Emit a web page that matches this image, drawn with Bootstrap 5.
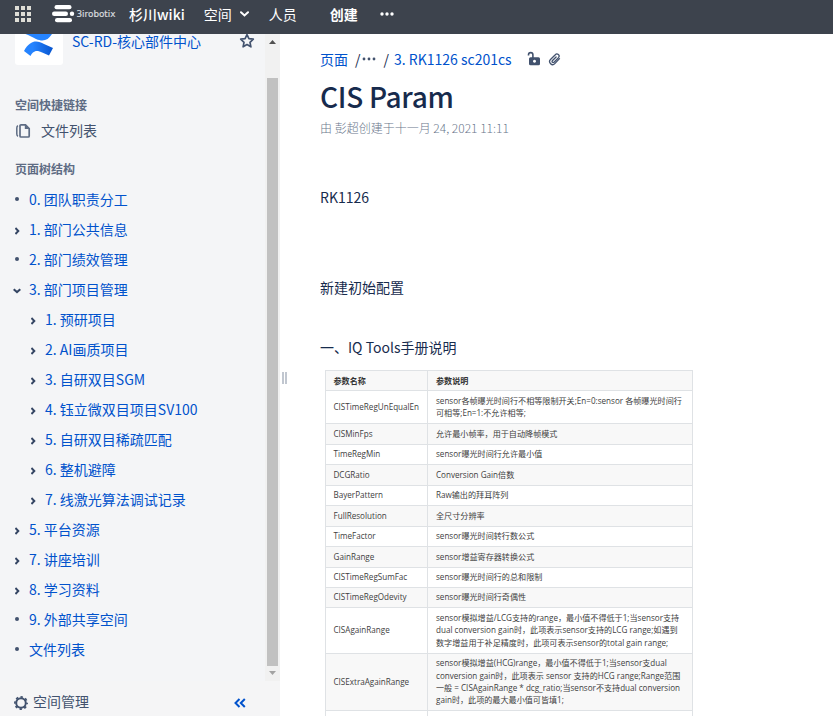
<!DOCTYPE html>
<html lang="zh-CN">
<head>
<meta charset="utf-8">
<meta name="viewport" content="width=device-width, initial-scale=1">
<title>CIS Param - 杉川wiki</title>
<link href="https://cdn.jsdelivr.net/npm/bootstrap@5.3.0/dist/css/bootstrap.min.css" rel="stylesheet">
<style>
body{font-family:"Noto Sans CJK SC",sans-serif;font-size:14px;line-height:20px;color:#172b4d;height:716px;background:#fff}
a{color:#0052cc;text-decoration:none}
svg{display:block;flex:none}
.fit{min-height:0}
.topbar{height:34px;background:#3d434d;color:#fff;padding:0 0 6px 15px}
.topbar a{color:#fff}
.side{width:280px;background:#f4f5f7}
.side-scroll{padding-left:15px}
.space-logo{width:48px;height:31px;background:#fff;border-radius:0 0 3px 3px}
.space-name{margin:-3px 0 0 9px;width:166px}
.side-title{font-size:12px;font-weight:700;color:#5e6c84;line-height:16px}
.side-text{color:#42526e}
.tree li{height:30px;line-height:28px;display:flex;align-items:center}
.tree li a{height:30px}
.tree .tw{width:14px;flex:none;overflow:visible}
.tree ul li{padding-left:16px}
.track{width:15px;background:#f1f1f1}
.thumb{width:11px;height:588px;background:#c1c1c1;margin-top:34px}
.side-foot{height:35px;background:#f5f5f6;padding:6px 34px 0 14px}
.grip{width:5px;height:12px;border:solid #c1c7d0;border-width:0 2px;margin:338px 0 0 2px}
.page{padding:15px 0 0 33px}
.page h1{font-size:28px;font-weight:500;line-height:34px;letter-spacing:-.28px;margin:10px 0 0;color:#172b4d}
.byline{font-size:12px;line-height:16px;color:#6b778c;font-weight:300}
.param{width:368px;table-layout:fixed;margin:13px 0 0 4.5px;font:8.11px/12.4px "Open Sans","Noto Sans CJK SC",sans-serif;border-collapse:collapse;white-space:nowrap}
.param td,.param th{border:1px solid #dfe2e5;padding:0 0 0 8px;vertical-align:middle;height:20.45px;color:#404040}
.param th{font-weight:700;color:#333}
.param tr:nth-child(odd){background:#f8f8f8}
.param .l2 td{height:33px}.param .l3 td{height:45.5px}.param .l4 td{height:57.4px}
</style>
<script src="https://cdn.jsdelivr.net/npm/bootstrap@5.3.0/dist/js/bootstrap.bundle.min.js"></script>
</head>
<body class="d-flex flex-column overflow-hidden">
<svg width="0" height="0" class="position-absolute"><defs>
<symbol id="right" viewBox="0 0 14 14"><path d="M.4 5 3.300 8 .4 11" fill="none" stroke="#344563" stroke-width="2"/></symbol>
<symbol id="dot" viewBox="0 0 14 14"><circle cx="2" cy="6" r="2" fill="#42526e"/></symbol>
</defs></svg>
<header class="topbar d-flex align-items-center flex-shrink-0">
  <svg width="16" height="16" viewBox="0 0 16 16" fill="#deddd6"><path d="M0 0h4v4H0zM6 0h4v4H6zM12 0h4v4h-4zM0 6h4v4H0zM6 6h4v4H6zM12 6h4v4h-4zM0 12h4v4H0zM6 12h4v4H6zM12 12h4v4h-4z"/></svg>
  <a href="#" class="d-flex align-items-center pe-2" style="margin-left:21px">
    <svg width="24" height="18" viewBox="0 0 24 18" fill="#fff"><rect x="2.500" y="0" width="17" height="4.300" rx="2.100"/><rect x="0" y="6.500" width="16" height="4.500" rx="2.200"/><circle cx="20" cy="8.800" r="2.200"/><rect x="3" y="13" width="17" height="4.300" rx="2.100"/></svg>
    <svg class="overflow-visible" width="40" height="18" viewBox="0 0 40 18"><text x="0.500" y="11.500" textLength="39" lengthAdjust="spacingAndGlyphs" font-family="DejaVu Sans" font-size="8.500" fill="#d8dade" stroke="#d8dade" stroke-width=".2">3irobotix</text></svg>
  </a>
  <a href="#" style="margin-left:5px;font-weight:500">杉川wiki</a>
  <a href="#" class="d-flex align-items-center" style="margin-left:19px">空间<svg class="ms-2" width="9" height="8" viewBox="0 0 9 8"><path d="M1 2.200 4.500 5.400 8 2.200" fill="none" stroke="#fff" stroke-width="2" stroke-linecap="round"/></svg></a>
  <a href="#" style="margin-left:20px">人员</a>
  <a href="#" class="fw-bold" style="margin-left:33px">创建</a>
  <svg style="margin-left:22px" width="14" height="4" viewBox="0 0 14 4" fill="#fff"><circle cx="2" cy="2" r="1.700"/><circle cx="7" cy="2" r="1.700"/><circle cx="12" cy="2" r="1.700"/></svg>
</header>
<div class="d-flex flex-grow-1 fit">
  <aside class="side d-flex flex-column flex-shrink-0">
    <div class="d-flex flex-grow-1 fit">
      <div class="side-scroll flex-grow-1">
        <div class="d-flex">
          <div class="space-logo"><svg width="48" height="31" viewBox="0 0 48 31"><defs><linearGradient id="lg"><stop offset=".3" stop-color="#2684ff"/><stop offset="1" stop-color="#0755cf"/></linearGradient></defs><path d="M10.500 0H37c-4 6.500-9 8-16 5C17 3 14 1.400 10.500 0z" fill="#2684ff"/><path d="M9 17c6-11 13-11 20-7l9 4-4 7.500c-5-2-8-4-11-4.500-4-.5-6 2-7.500 5z" fill="url(#lg)"/></svg></div>
          <a href="#" class="space-name">SC-RD-核心部件中心</a>
          <svg style="margin:-1px 0 0 1px" width="16" height="16" viewBox="0 0 16 16"><path d="M8 1.700 9.900 5.700 14.300 6.200 11 9.300 11.900 13.800 8 11.600 4.100 13.800 5 9.300 1.700 6.200 6.100 5.700z" fill="none" stroke="#42526e" stroke-width="1.700" stroke-linejoin="round"/></svg>
        </div>
        <div class="side-title" style="margin-top:32px">空间快捷链接</div>
        <a href="#" class="side-text d-flex align-items-center" style="margin-top:7px"><svg style="margin:2px 10px 0 0" width="16" height="16" viewBox="0 0 16 16"><path d="M6 1.800h4.500L14.200 5.500V13a1 1 0 0 1-1 1H6a1 1 0 0 1-1-1V2.800a1 1 0 0 1 1-1z" fill="none" stroke="#5e6c84" stroke-width="1.700"/><path d="M9.800 1.500v4.500h4.500z" fill="#5e6c84"/><path d="M3 2.800Q1.800 3.200 1.800 5v6q0 1.700 1.200 2.200" fill="none" stroke="#5e6c84" stroke-width="1.500"/></svg>文件列表</a>
        <div class="side-title" style="margin:21px 0 8px">页面树结构</div>
        <ul class="tree list-unstyled mb-0">
          <li><svg class="tw" height="14"><use href="#dot"/></svg><a href="#">0. 团队职责分工</a></li>
          <li><svg class="tw" height="14"><use href="#right"/></svg><a href="#">1. 部门公共信息</a></li>
          <li><svg class="tw" height="14"><use href="#dot"/></svg><a href="#">2. 部门绩效管理</a></li>
          <li><svg class="tw" height="14" viewBox="0 0 14 14"><path d="M-1.300 6.200 2 9.100 5.300 6.200" fill="none" stroke="#344563" stroke-width="2"/></svg><a href="#">3. 部门项目管理</a></li>
        </ul>
        <div class="tree"><ul class="list-unstyled mb-0">
          <li><svg class="tw" height="14"><use href="#right"/></svg><a href="#">1. 预研项目</a></li>
          <li><svg class="tw" height="14"><use href="#right"/></svg><a href="#">2. AI画质项目</a></li>
          <li><svg class="tw" height="14"><use href="#right"/></svg><a href="#">3. 自研双目SGM</a></li>
          <li><svg class="tw" height="14"><use href="#right"/></svg><a href="#">4. 钰立微双目项目SV100</a></li>
          <li><svg class="tw" height="14"><use href="#right"/></svg><a href="#">5. 自研双目稀疏匹配</a></li>
          <li><svg class="tw" height="14"><use href="#right"/></svg><a href="#">6. 整机避障</a></li>
          <li><svg class="tw" height="14"><use href="#right"/></svg><a href="#">7. 线激光算法调试记录</a></li>
        </ul></div>
        <ul class="tree list-unstyled mb-0">
          <li><svg class="tw" height="14"><use href="#right"/></svg><a href="#">5. 平台资源</a></li>
          <li><svg class="tw" height="14"><use href="#right"/></svg><a href="#">7. 讲座培训</a></li>
          <li><svg class="tw" height="14"><use href="#right"/></svg><a href="#">8. 学习资料</a></li>
          <li><svg class="tw" height="14"><use href="#dot"/></svg><a href="#">9. 外部共享空间</a></li>
          <li><svg class="tw" height="14"><use href="#dot"/></svg><a href="#">文件列表</a></li>
        </ul>
      </div>
      <div class="track d-flex flex-column align-items-center flex-shrink-0">
        <svg style="margin-top:6px" width="7" height="4" viewBox="0 0 7 4"><path d="M3.500 0 7 4H0z" fill="#505050"/></svg>
        <div class="thumb"></div>
        <svg style="margin-top:5px" width="7" height="4" viewBox="0 0 7 4"><path d="M0 0h7L3.500 4z" fill="#a3a3a3"/></svg>
      </div>
    </div>
    <div class="side-foot d-flex justify-content-between align-items-start flex-shrink-0">
      <a href="#" class="side-text d-flex"><svg style="margin:9px 5px 0 0" width="14" height="14" viewBox="0 0 14 14"><circle cx="7" cy="7" r="4.800" fill="none" stroke="#42526e" stroke-width="2"/><circle cx="7" cy="7" r="6.100" fill="none" stroke="#42526e" stroke-width="1.700" stroke-dasharray="2.400 2.390" stroke-dashoffset="1.200"/></svg><span style="margin-top:4px">空间管理</span></a>
      <svg style="margin-top:11px" width="12" height="10" viewBox="0 0 12 10"><path d="M5.500 1 1.500 5l4 4M10.800 1 6.800 5l4 4" fill="none" stroke="#0052cc" stroke-width="2"/></svg>
    </div>
  </aside>
  <div class="grip flex-shrink-0"></div>
  <main class="page flex-grow-1">
    <nav class="d-flex align-items-center">
      <a href="#">页面</a><span style="margin-left:7px">/</span>
      <svg style="margin:0 0 0 1px" width="14" height="4" viewBox="0 0 14 4" fill="#42526e"><circle cx="2" cy="2" r="1.400"/><circle cx="7" cy="2" r="1.400"/><circle cx="12" cy="2" r="1.400"/></svg>
      <span class="ms-2">/</span><a href="#" style="margin-left:5px">3. RK1126 sc201cs</a>
      <svg style="margin-left:15px" width="14" height="16" viewBox="0 0 14 16"><path d="M1.500 4.500V3.800a2.200 2.200 0 0 1 4.400 0V7" fill="none" stroke="#42526e" stroke-width="1.600"/><path fill-rule="evenodd" d="M3.500 6.300h8q1.500 0 1.500 1.500v5q0 1.500-1.500 1.500h-8Q2 14.300 2 12.800v-5Q2 6.300 3.500 6.300zM7.500 8.800a1.500 1.500 0 1 0 .01 0z" fill="#42526e"/></svg>
      <svg style="margin-left:7px" width="13" height="14" viewBox="0 0 13 14"><path d="M11.200 6.200 6.500 11.200a2.900 2.900 0 0 1-4.300-4.100L7 2.300a2 2 0 0 1 3.200 2.900L5.700 9.800a1 1 0 0 1-1.700-1.400L7.800 4.600" transform="translate(.3 .4)" fill="none" stroke="#42526e" stroke-width="1.300" stroke-linecap="round"/></svg>
    </nav>
    <h1>CIS Param</h1>
    <div class="byline" style="margin-top:7px">由 彭超创建于十一月 24, 2021 11:11</div>
    <p class="mb-0" style="margin-top:51px">RK1126</p>
    <p class="mb-0" style="margin-top:70px">新建初始配置</p>
    <p class="mb-0" style="margin-top:40px">一、IQ Tools手册说明</p>
    <table class="param">
      <colgroup><col style="width:102.500px"><col></colgroup>
      <tbody>
      <tr><th>参数名称</th><th>参数说明</th></tr>
      <tr class="l2"><td>CISTimeRegUnEqualEn</td><td>sensor各帧曝光时间行不相等限制开关;En=0:sensor 各帧曝光时间行<br>可相等;En=1:不允许相等;</td></tr>
      <tr><td>CISMinFps</td><td>允许最小帧率，用于自动降帧模式</td></tr>
      <tr><td>TimeRegMin</td><td>sensor曝光时间行允许最小值</td></tr>
      <tr><td>DCGRatio</td><td>Conversion Gain倍数</td></tr>
      <tr><td>BayerPattern</td><td>Raw输出的拜耳阵列</td></tr>
      <tr><td>FullResolution</td><td>全尺寸分辨率</td></tr>
      <tr><td>TimeFactor</td><td>sensor曝光时间转行数公式</td></tr>
      <tr><td>GainRange</td><td>sensor增益寄存器转换公式</td></tr>
      <tr><td>CISTimeRegSumFac</td><td>sensor曝光时间行的总和限制</td></tr>
      <tr><td>CISTimeRegOdevity</td><td>sensor曝光时间行奇偶性</td></tr>
      <tr class="l3"><td>CISAgainRange</td><td>sensor模拟增益/LCG支持的range，最小值不得低于1;当sensor支持<br>dual conversion gain时，此项表示sensor支持的LCG range;如遇到<br>数字增益用于补足精度时，此项可表示sensor的total gain range;</td></tr>
      <tr class="l4"><td>CISExtraAgainRange</td><td>sensor模拟增益(HCG)range，最小值不得低于1;当sensor支dual<br>conversion gain时，此项表示 sensor 支持的HCG range;Range范围<br>一般 = CISAgainRange * dcg_ratio;当sensor不支持dual conversion<br>gain时，此项的最大最小值可皆填1;</td></tr>
      <tr><td></td><td></td></tr>
      </tbody>
    </table>
  </main>
</div>
</body>
</html>
